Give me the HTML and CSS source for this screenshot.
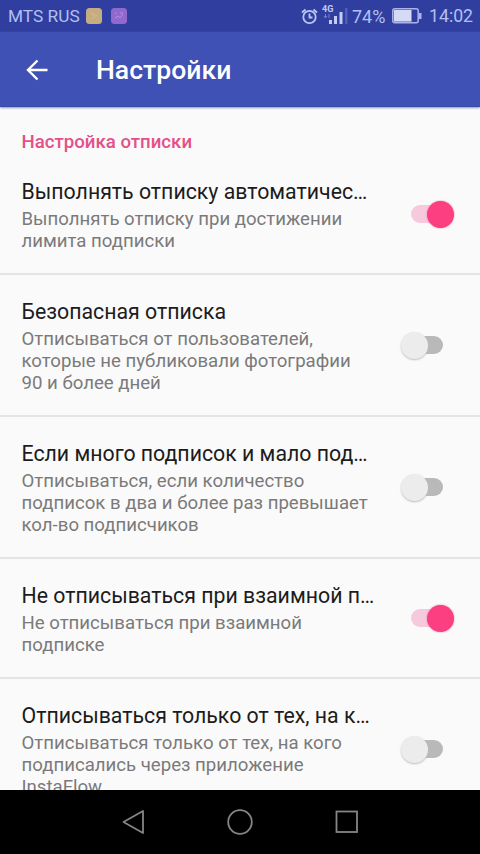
FILE: index.html
```
<!DOCTYPE html>
<html lang="ru">
<head>
<meta charset="utf-8">
<title>Настройки</title>
<link rel="stylesheet" href="styles.css">
</head>
<body>
<div class="screen">
  <div class="status">
    <span class="carrier">MTS RUS</span>
    <svg class="note" width="16" height="16" viewBox="0 0 16 16"><rect width="16" height="16" rx="3.500" fill="#c5ad83"/><path d="M5 5l5 3M6 11l5-4" stroke="#d2b67c" stroke-width="1.500" fill="none"/></svg>
    <svg class="note second" width="16" height="16" viewBox="0 0 16 16"><rect width="16" height="16" rx="3.500" fill="#9069ce"/><path d="M4 5h2M9 5h3M4 10l3-2 2 2 3-4" stroke="#b68be0" fill="none"/></svg>
    <svg class="alarm" width="17" height="17" viewBox="0 0 17 17" fill="none" stroke="#bcc6f5" stroke-width="1.800"><circle cx="8.5" cy="9" r="6.200"/><path d="M8.500 5.500V9.500h3M1 4.500l3.500-3M16 4.500l-3.500-3"/></svg>
    <svg class="signal" width="27" height="24" viewBox="0 0 27 24"><text x="0" y="8" class="net">4G</text><path d="M7 16h3v4H7zM12 12h3v8h-3zM17.500 8h3v12h-3z" fill="#c3ccf7"/><path d="M23 4h2.500v16H23z" fill="#4e5eb9"/><path d="M3.500 10v4M2 12l1.500 2L5 12M7 14v-4" stroke="#7180cf" fill="none"/></svg>
    <span class="percent">74%</span>
    <svg class="battery" width="30" height="16" viewBox="0 0 30 16"><rect x=".8" y=".8" width="25.400" height="14" rx="2" fill="none" stroke="#aab5ec" stroke-width="1.500"/><rect x="2" y="2" width="17.500" height="11.600" fill="#d5dbf7"/><path d="M27 5h2.500v6H27z" fill="#aab5ec"/></svg>
    <span class="clock">14:02</span>
  </div>
  <header class="bar">
    <svg width="22" height="22" viewBox="0 0 22 22" fill="none" stroke="#fff" stroke-width="2.400"><path d="M21.500 11H2M11.500 1.500L2 11l9.500 9.500"/></svg>
    <h1>Настройки</h1>
  </header>
  <main class="list">
    <h2>Настройка отписки</h2>
    <section class="item">
      <div class="text"><h3>Выполнять отписку автоматичес…</h3><p>Выполнять отписку при достижении<br>лимита подписки</p></div>
      <span class="switch on"></span>
    </section>
    <section class="item">
      <div class="text"><h3>Безопасная отписка</h3><p>Отписываться от пользователей,<br>которые не публиковали фотографии<br>90 и более дней</p></div>
      <span class="switch"></span>
    </section>
    <section class="item">
      <div class="text"><h3>Если много подписок и мало под…</h3><p>Отписываться, если количество<br>подписок в два и более раз превышает<br>кол-во подписчиков</p></div>
      <span class="switch"></span>
    </section>
    <section class="item">
      <div class="text"><h3>Не отписываться при взаимной п…</h3><p>Не отписываться при взаимной<br>подписке</p></div>
      <span class="switch on"></span>
    </section>
    <section class="item">
      <div class="text"><h3>Отписываться только от тех, на к…</h3><p>Отписываться только от тех, на кого<br>подписались через приложение<br>InstaFlow</p></div>
      <span class="switch"></span>
    </section>
  </main>
  <nav class="nav">
    <svg width="24" height="28" viewBox="0 0 24 28"><path d="M22 3v22L2.500 14z" stroke-linejoin="round"/></svg>
    <svg width="28" height="28" viewBox="0 0 28 28"><circle cx="14" cy="14" r="11.800"/></svg>
    <svg width="24" height="28" viewBox="0 0 24 28"><rect x="1.500" y="3.500" width="20.500" height="20.500"/></svg>
  </nav>
</div>
</body>
</html>
```
FILE: styles.css
```
* { box-sizing: border-box; }
body { margin: 0; font-family: Roboto, sans-serif; }
h1, h2, h3, p { margin: 0; font-weight: 400; }
.screen { width: 480px; height: 854px; display: flex; flex-direction: column; overflow: hidden; background: #fafafa; }
.status { height: 32px; flex: none; display: flex; align-items: center; padding: 0 8px; background: #303f9f; color: #b3bff3; font-size: 18px; white-space: nowrap; }
.carrier { width: 72px; margin-right: 6px; font-size: 17.300px; }
.second { margin-left: 9px; }
.alarm { margin-left: auto; }
.signal { margin: 0 0 0 4px; }
.net { font-size: 9px; font-weight: 700; fill: #c3ccf7; }
.percent { margin-left: 3px; width: 35px; }
.battery { margin-left: 5px; }
.clock { margin-left: 7px; width: 43px; font-size: 17.700px; }
.bar { height: 75px; flex: none; display: flex; align-items: center; padding: 1px 0 0 26px; gap: 48px; background: #3f51b5; border-bottom: 1px solid #3949a6; box-shadow: 0 1px 2px #8e93b5; z-index: 1; }
h1 { color: #fff; font-size: 26.600px; font-weight: 500; }
.list { height: 683px; flex: none; overflow: hidden; }
h2 { height: 48px; padding: 23px 0 0 21.500px; color: #e45088; font-size: 18.650px; line-height: 24px; font-weight: 500; }
.item { display: flex; align-items: center; justify-content: space-between; padding: 22px 26px 21px 21.500px; border-bottom: 2px solid #e4e4e4; }
.text { width: 360px; }
h3 { color: #1c1c1c; font-size: 21.300px; line-height: 30px; height: 31px; white-space: nowrap; }
p { color: #7a7a7a; font-size: 18.620px; line-height: 22px; white-space: nowrap; }
.switch { width: 54px; height: 28px; flex: none; position: relative; }
.switch::before { content: ""; position: absolute; left: 11px; top: 4px; width: 32px; height: 18px; border-radius: 9px; background: #b9b9b9; }
.switch::after { content: ""; position: absolute; left: 1px; top: 0; width: 27px; height: 27px; border-radius: 50%; background: #ececec; box-shadow: 0 1px 2px #bdbdbd; }
.switch.on::before { background: #f7c9dc; }
.switch.on::after { left: 27px; background: #fb3f80; box-shadow: 0 0 2px #d9799c; }
.nav { height: 64px; flex: none; display: flex; align-items: center; justify-content: space-between; padding: 0 121px; background: #000; }
.nav svg { fill: none; stroke: #858585; stroke-width: 1.800; }
```
